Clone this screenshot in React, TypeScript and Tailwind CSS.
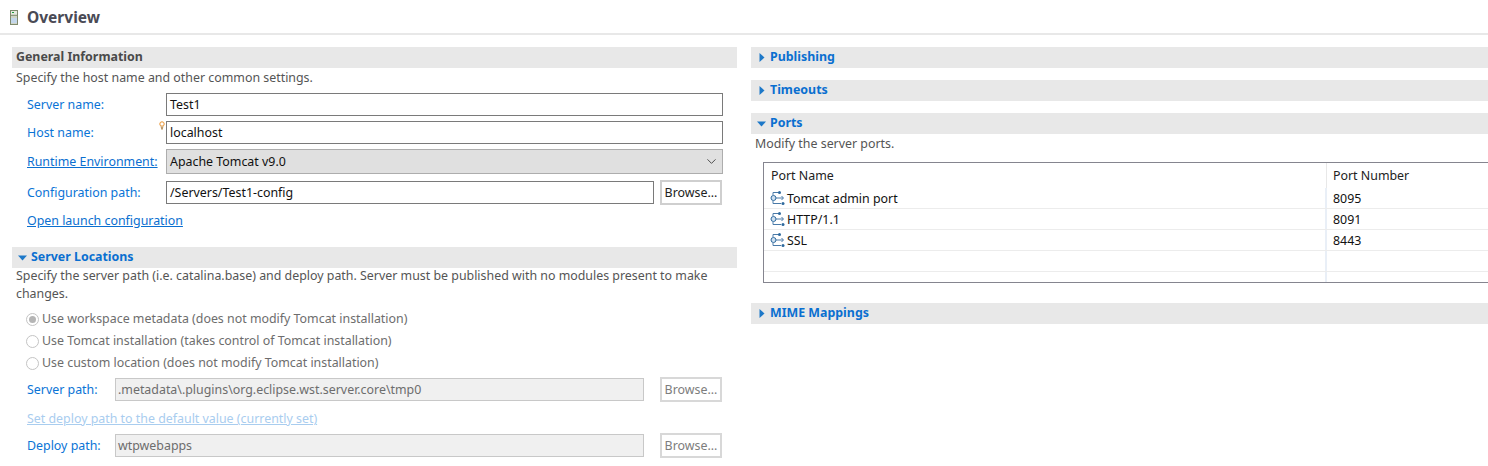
import React from 'react';
import { ChevronDown } from 'lucide-react';

const labelCls = 'text-[12.4px] leading-[18px] text-[#0a74d6]';
const linkCls = 'text-[12.4px] leading-[18px] pt-[1px] text-[#0a6fd0] underline';

const ServerIcon = () => (
  <svg width="8" height="15" viewBox="0 0 8 15" className="shrink-0">
    <rect x="0.5" y="0.5" width="7" height="14" fill="#cfd4c6" stroke="#7f8a6e" />
    <rect x="1" y="1" width="6" height="3" fill="#e6eae0" />
    <rect x="2" y="2" width="2" height="1" fill="#1d9a3a" />
    <rect x="1" y="5" width="6" height="1" fill="#8e9a80" />
    <rect x="1" y="8" width="6" height="5" fill="#c3d6ea" />
  </svg>
);

const PortIcon = () => (
  <svg width="16" height="16" viewBox="0 0 16 16" fill="none" className="shrink-0">
    <path d="M3 5V2.5H9M3 11v2.5H11M6 8h7M11.5 6l2 2-2 2" stroke="#4a7aa8" strokeWidth="1" />
    <circle cx="3.5" cy="8" r="2.5" fill="#cfe0f0" stroke="#2f6a9e" />
    <circle cx="9.5" cy="2.5" r="1.5" fill="#2f6a9e" />
    <circle cx="13" cy="13.5" r="1.5" fill="#2f6a9e" />
  </svg>
);

const Twisty = ({ open }: { open?: boolean }) =>
  open ? (
    <svg width="9" height="6" viewBox="0 0 9 6" className="shrink-0">
      <path d="M0 0.5h9L4.5 5.5z" fill="#1d78c8" />
    </svg>
  ) : (
    <svg width="6" height="9" viewBox="0 0 6 9" className="shrink-0">
      <path d="M0.5 0v9L5.5 4.5z" fill="#1d78c8" />
    </svg>
  );

const SectionBar = ({ title, open, plain }: { title: string; open?: boolean; plain?: boolean }) => (
  <div className="h-[21px] bg-[#e8e8e8] flex items-center">
    {plain ? (
      <span className="ml-[4px] text-[12.4px] font-bold text-[#4a4a4a]">{title}</span>
    ) : (
      <>
        <span className={open ? 'ml-[6px] w-[13px] flex' : 'ml-[8px] w-[11px] flex'}>
          <Twisty open={open} />
        </span>
        <span className="text-[12.4px] font-bold text-[#0a6fd0]">{title}</span>
      </>
    )}
  </div>
);

const TextBox = ({ value, disabled, className }: { value: string; disabled?: boolean; className?: string }) => (
  <div
    className={
      'h-[23px] flex items-center pt-[2px] border text-[12.4px] ' +
      (disabled ? 'pl-[2px] bg-[#f0f0f0] border-[#c8c8c8] text-[#6d6d6d] ' : 'pl-[3px] bg-white border-[#7a7a7a] text-[#111] ') +
      (className ?? '')
    }
  >
    {value}
  </div>
);

const BrowseButton = ({ disabled }: { disabled?: boolean }) => (
  <button
    className={
      'w-[62px] h-[25px] my-[-1px] ml-[6px] pt-[1px] shrink-0 border-2 text-[12.4px] bg-white ' +
      (disabled ? 'border-[#d8d8d8] text-[#7d7d7d]' : 'border-[#cfcfcf] text-[#222]')
    }
  >
    Browse...
  </button>
);

const ports = [
  { name: 'Tomcat admin port', num: '8095' },
  { name: 'HTTP/1.1', num: '8091' },
  { name: 'SSL', num: '8443' },
  { name: '', num: '' },
];

export default function App() {
  return (
    <div className="w-[1488px] h-[466px] overflow-hidden bg-white font-['Noto_Sans',sans-serif] text-[12.4px]">
      <div className="h-[35px] border-b-2 border-[#e8e8e8] flex items-center pl-[10px] pt-[2px]">
        <ServerIcon />
        <span className="ml-[9px] text-[15.5px] font-bold text-[#4a4a55]">Overview</span>
      </div>

      <div className="flex pl-[12px] pt-[12px]">
        {/* left column */}
        <div className="w-[725px] shrink-0">
          <SectionBar title="General Information" plain />
          <div className="pl-[4px] pb-[4px] h-[25px] flex items-center text-[#555]">
            Specify the host name and other common settings.
          </div>

          <div className="flex items-center">
            <span className={'w-[154px] pl-[15px] ' + labelCls}>Server name:</span>
            <TextBox value="Test1" className="w-[557px]" />
          </div>
          <div className="flex items-center mt-[5px] relative">
            <span className={'w-[154px] pl-[15px] ' + labelCls}>Host name:</span>
            <svg width="6" height="9" viewBox="0 0 6 9" className="absolute left-[147px] top-0">
              <circle cx="3" cy="3" r="2.2" fill="#fff" stroke="#e8912d" />
              <path d="M2 5.5L3 8.5L4 5.5" fill="none" stroke="#b08a55" />
            </svg>
            <TextBox value="localhost" className="w-[557px]" />
          </div>
          <div className="flex items-center mt-[5px]">
            <span className={'w-[154px] pl-[15px] ' + linkCls}>Runtime Environment:</span>
            <div className="w-[557px] h-[25px] bg-[#e0e0e0] border border-[#adadad] flex items-center justify-between pl-[3px] pr-[3px] text-[#111]">
              <span className="pt-[2px]">Apache Tomcat v9.0</span>
              <ChevronDown size={15} strokeWidth={1.5} className="text-[#444]" />
            </div>
          </div>
          <div className="flex items-center mt-[7px]">
            <span className={'w-[154px] pl-[15px] ' + labelCls}>Configuration path:</span>
            <TextBox value="/Servers/Test1-config" className="w-[488px]" />
            <BrowseButton />
          </div>
          <div className="pl-[15px] mt-[7px] h-[18px] flex">
            <span className={linkCls}>Open launch configuration</span>
          </div>

          <div className="mt-[18px]">
            <SectionBar title="Server Locations" open />
          </div>
          <div className="pl-[4px] text-[#555] leading-[18px]">
            <div className="mt-[-1px] w-[710px] leading-[18px]">
              Specify the server path (i.e. catalina.base) and deploy path. Server must be published with no modules present to make changes.
            </div>
          </div>

          <div className="mt-[7px] pl-[14px] text-[#6d6d6d] flex flex-col gap-[4px]">
            {[
              'Use workspace metadata (does not modify Tomcat installation)',
              'Use Tomcat installation (takes control of Tomcat installation)',
              'Use custom location (does not modify Tomcat installation)',
            ].map((t, i) => (
              <div key={t} className="h-[18px] flex items-center gap-[3px]">
                <span className="w-[13px] h-[13px] rounded-full border border-[#c4c4c4] bg-white flex items-center justify-center">
                  {i === 0 && <span className="w-[7px] h-[7px] rounded-full bg-[#b5b5b5]" />}
                </span>
                {t}
              </div>
            ))}
          </div>

          <div className="flex items-center mt-[6px]">
            <span className={'w-[103px] pl-[15px] ' + labelCls}>Server path:</span>
            <TextBox value=".metadata\.plugins\org.eclipse.wst.server.core\tmp0" disabled className="w-[529px]" />
            <span className="w-[10px]" />
            <BrowseButton disabled />
          </div>
          <div className="pl-[15px] mt-[8px] h-[18px] pt-[1px] leading-[18px] text-[12.4px] text-[#a9cdef] underline">
            Set deploy path to the default value (currently set)
          </div>
          <div className="flex items-center mt-[7px]">
            <span className={'w-[103px] pl-[15px] ' + labelCls}>Deploy path:</span>
            <TextBox value="wtpwebapps" disabled className="w-[529px]" />
            <span className="w-[10px]" />
            <BrowseButton disabled />
          </div>
        </div>

        {/* right column */}
        <div className="ml-[14px] w-[737px] shrink-0">
          <SectionBar title="Publishing" />
          <div className="mt-[12px]">
            <SectionBar title="Timeouts" />
          </div>
          <div className="mt-[12px]">
            <SectionBar title="Ports" open />
          </div>
          <div className="pl-[4px] h-[18px] pt-[1px] leading-[18px] text-[#555]">Modify the server ports.</div>

          <div className="ml-[12px] mt-[10px] h-[121px] border border-[#85858f] border-r-0">
            <div className="flex h-[25px] items-center text-[#222]">
              <span className="w-[563px] pl-[7px] pt-[2px] h-full flex items-center border-r border-[#e8e8e8]">Port Name</span>
              <span className="pl-[6px] pt-[2px]">Port Number</span>
            </div>
            {ports.map((p, i) => (
              <div key={i} className="flex h-[21px] items-center border-b border-[#ececec] text-[#111]">
                <span className="w-[563px] pl-[6px] flex items-center gap-[1px] h-full border-r-2 border-[#e9eff7]">
                  {p.name && <PortIcon />}
                  <span className="pt-[3px]">{p.name}</span>
                </span>
                <span className="pl-[6px] pt-[3px]">{p.num}</span>
              </div>
            ))}
            <div className="h-[10px] flex">
              <span className="w-[563px] h-full border-r-2 border-[#e9eff7]" />
            </div>
          </div>

          <div className="mt-[20px]">
            <SectionBar title="MIME Mappings" />
          </div>
        </div>
      </div>
    </div>
  );
}
